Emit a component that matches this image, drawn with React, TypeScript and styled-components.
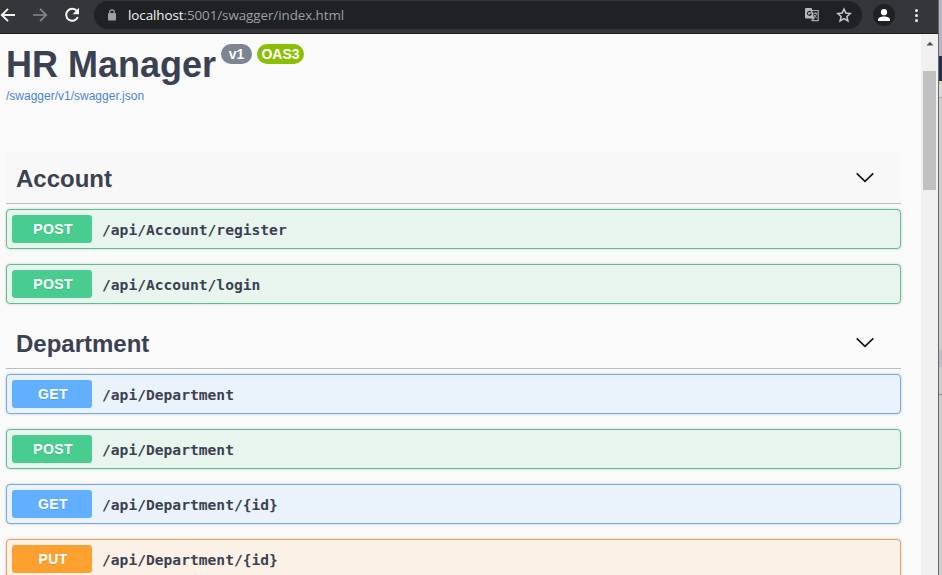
import React from 'react';
import styled, { createGlobalStyle } from 'styled-components';

const GlobalStyle = createGlobalStyle`
  * { box-sizing: border-box; }
  body { margin: 0; overflow: hidden; background: #fafafa; }
`;

const Screen = styled.div`
  display: flex;
  width: 942px;
  height: 575px;
  overflow: hidden;
  font-family: "Liberation Sans", Arial, sans-serif;
  color: #3b4151;
`;
const BrowserWindow = styled.div`
  display: flex;
  flex-direction: column;
  width: 939px;
  border-right: 1px solid #68686a;
`;
const Desktop = styled.div`
  display: flex;
  flex-direction: column;
  width: 3px;
  background: #cdcdce;
`;
const DesktopBand = styled.div<{ $h: number; $color: string }>`
  height: ${p => p.$h}px;
  background: ${p => p.$color};
`;
const Toolbar = styled.div`
  display: flex;
  align-items: flex-start;
  height: 34px;
  flex: none;
  background: #35363a;
  border-bottom: 1px solid #231b20;
`;
const NavIcons = styled.div`
  display: flex;
  gap: 16px;
  padding-top: 7px;
  width: 94px;
  svg { flex: none; display: block; }
`;
const AddressBar = styled.div`
  display: flex;
  align-items: center;
  width: 768px;
  height: 28px;
  padding: 0 10px 0 12px;
  margin-top: 1px;
  border-radius: 14px;
  background: #202124;
`;
const Url = styled.div`
  flex: 1;
  margin-left: 10px;
  font: 13.4px/20px "Open Sans", "Noto Sans", sans-serif;
  letter-spacing: -0.07px;
  color: #9aa0a6;
  white-space: nowrap;
`;
const Host = styled.span`
  color: #f4f5f6;
`;
const BarIcons = styled.div`
  display: flex;
  gap: 16px;
  align-items: center;
`;
const Avatar = styled.div`
  display: flex;
  align-items: center;
  justify-content: center;
  width: 22px;
  height: 22px;
  margin: 4px 0 0 11px;
  border-radius: 50%;
  background: #202124;
`;
const MenuDots = styled.div`
  display: flex;
  flex-direction: column;
  gap: 2px;
  margin: 9px 0 0 20px;
`;
const Dot = styled.i`
  width: 3px;
  height: 3px;
  border-radius: 1.5px;
  background: #f1f3f4;
`;
const Viewport = styled.div`
  display: flex;
  flex: 1;
  min-height: 0;
`;
const Page = styled.main`
  width: 921px;
  padding: 10px 20px 0 6px;
  background: #fafafa;
  overflow: hidden;
`;
const Scrollbar = styled.div`
  display: flex;
  flex-direction: column;
  align-items: center;
  width: 17px;
  padding-top: 7px;
  background: #f0f0f0;
`;
const Thumb = styled.div`
  width: 13px;
  height: 119px;
  margin-top: 25px;
  background: #c1c1c1;
`;
const TitleRow = styled.div`
  display: flex;
  align-items: flex-start;
  height: 43px;
`;
const Title = styled.h1`
  margin: 0;
  width: 215px;
  font-size: 36px;
  line-height: 41px;
  font-weight: bold;
  white-space: nowrap;
`;
const Pill = styled.span<{ $w: number; $color: string }>`
  width: ${p => p.$w}px;
  height: 20px;
  margin-right: 5px;
  border-radius: 10px;
  background: ${p => p.$color};
  color: #fff;
  font-size: 14px;
  line-height: 21px;
  font-weight: bold;
  text-align: center;
`;
const SpecLink = styled.a`
  display: block;
  height: 18px;
  color: #4a84d6;
  font-size: 12px;
  line-height: 18px;
`;
const Sections = styled.div`
  margin-top: 48px;
`;
const SectionHead = styled.div<{ $hover?: boolean }>`
  display: flex;
  align-items: center;
  justify-content: space-between;
  height: 51px;
  margin-bottom: 5px;
  padding: 0 26px 0 10px;
  border-bottom: 1px solid #bbbcc0;
  background: ${p => (p.$hover ? '#f8f8f8' : 'transparent')};
`;
const SectionName = styled.h2`
  margin: 0;
  padding-top: 2px;
  font-size: 24px;
  line-height: 30px;
  font-weight: bold;
`;
const Operation = styled.div<{ $color: string; $bg: string }>`
  display: flex;
  align-items: center;
  height: 40px;
  margin-bottom: 15px;
  padding: 0 5px;
  border: 1px solid ${p => p.$color};
  border-radius: 4px;
  background: ${p => p.$bg};
  box-shadow: 0 0 3px rgba(0, 0, 0, 0.19);
`;
const Group = styled.section`
  height: 165px;
`;
const Method = styled.span<{ $color: string }>`
  width: 80px;
  height: 28px;
  padding-left: 2px;
  border-radius: 3px;
  background: ${p => p.$color};
  color: #fff;
  font-size: 14px;
  line-height: 28px;
  font-weight: bold;
  letter-spacing: 0.4px;
  text-align: center;
  text-shadow: 0 1px 0 rgba(0, 0, 0, 0.1);
`;
const Path = styled.span`
  margin: 2px 0 0 10px;
  font: bold 14.62px/20px "DejaVu Sans Mono", monospace;
`;

type Verb = 'GET' | 'POST' | 'PUT';
const palette: Record<Verb, { color: string; border: string; bg: string }> = {
  GET: { color: '#61affe', border: '#73a9e4', bg: '#eaf3fb' },
  POST: { color: '#49cc90', border: '#5bbf92', bg: '#e7f5ee' },
  PUT: { color: '#fca130', border: '#eaa35c', bg: '#fbf1e7' },
};
const groups: { name: string; ops: [Verb, string][] }[] = [
  { name: 'Account', ops: [['POST', '/api/Account/register'], ['POST', '/api/Account/login']] },
  {
    name: 'Department',
    ops: [
      ['GET', '/api/Department'],
      ['POST', '/api/Department'],
      ['GET', '/api/Department/{id}'],
      ['PUT', '/api/Department/{id}'],
    ],
  },
];

const Navigation = () => (
  <NavIcons>
    <svg width="16" height="16" viewBox="0 0 16 16" fill="none" stroke="#f1f3f4" strokeWidth="1.9">
      <path d="M15 8H2M8 1.8 1.8 8 8 14.2" />
    </svg>
    <svg width="16" height="16" viewBox="0 0 16 16" fill="none" stroke="#85878a" strokeWidth="1.7">
      <path d="M1 8h13M8 1.8 14.2 8 8 14.2" />
    </svg>
    <svg width="16" height="16" viewBox="0 0 16 16">
      <path d="M13 4.2A6 6 0 1 0 13.8 10" fill="none" stroke="#f1f3f4" strokeWidth="2" />
      <path d="M15 .8v6.4H8.6z" fill="#f1f3f4" />
    </svg>
  </NavIcons>
);

const Lock = () => (
  <svg width="12" height="14" viewBox="0 0 12 14">
    <rect x="2" y="5" width="8" height="7.5" rx="1" fill="#9aa0a6" />
    <path d="M3.7 5.5V4.2a2.3 2.3 0 0 1 4.6 0v1.3" fill="none" stroke="#9aa0a6" strokeWidth="1.2" />
  </svg>
);

const Translate = () => (
  <svg width="16" height="16" viewBox="0 0 16 16">
    <path d="M6 3.5h8.2v10.2H7.6" fill="none" stroke="#a5a8ac" strokeWidth="1.2" />
    <path d="M2 1h5.6l2.7 10.5H2a1 1 0 0 1-1-1V2a1 1 0 0 1 1-1z" fill="#b6b8bb" />
    <path d="M7 5.2A2 2 0 1 0 7.3 7H5.5" fill="none" stroke="#292a2d" strokeWidth="1.1" />
    <path d="M9.2 6.3h4M11.3 5.3v1M12.6 6.5c-.5 2-1.5 3.4-2.8 4.2M10 7.7c.6 1.4 1.5 2.5 2.8 3.4M8 11.5l2.3 0-2.2 2.3z" fill="none" stroke="#a5a8ac" />
  </svg>
);

const Star = () => (
  <svg width="16" height="16" viewBox="0 0 16 16" fill="none" stroke="#c8cacc" strokeWidth="1.5">
    <path d="m8 2 1.8 4.1 4.5.4-3.4 3 1 4.4L8 11.6l-3.9 2.3 1-4.4-3.4-3 4.5-.4z" />
  </svg>
);

const Chevron = () => (
  <svg width="20" height="20" viewBox="0 0 20 20" fill="none" stroke="#111" strokeWidth="1.6">
    <path d="m1.7 5.3 8.3 8 8.3-8" />
  </svg>
);

export default function App() {
  return (
    <>
      <GlobalStyle />
      <Screen>
        <BrowserWindow>
          <Toolbar>
            <Navigation />
            <AddressBar>
              <Lock />
              <Url><Host>localhost</Host>:5001/swagger/index.html</Url>
              <BarIcons><Translate /><Star /></BarIcons>
            </AddressBar>
            <Avatar>
              <svg width="12" height="14" viewBox="0 0 12 14" fill="#fff">
                <circle cx="6" cy="4.2" r="3.1" />
                <path d="M0 13v-1.5C0 9.5 3.2 8.5 6 8.5s6 1 6 3V13z" />
              </svg>
            </Avatar>
            <MenuDots><Dot /><Dot /><Dot /></MenuDots>
          </Toolbar>
          <Viewport>
            <Page>
              <TitleRow>
                <Title>HR Manager</Title>
                <Pill $w={31} $color="#7d8492">v1</Pill>
                <Pill $w={47} $color="#89bf04">OAS3</Pill>
              </TitleRow>
              <SpecLink>/swagger/v1/swagger.json</SpecLink>
              <Sections>
                {groups.map((group, i) => (
                  <Group key={group.name}>
                    <SectionHead $hover={i === 0}>
                      <SectionName>{group.name}</SectionName>
                      <Chevron />
                    </SectionHead>
                    {group.ops.map(([verb, path]) => (
                      <Operation key={verb + path} $color={palette[verb].border} $bg={palette[verb].bg}>
                        <Method $color={palette[verb].color}>{verb}</Method>
                        <Path>{path}</Path>
                      </Operation>
                    ))}
                  </Group>
                ))}
              </Sections>
            </Page>
            <Scrollbar>
              <svg width="8" height="5" viewBox="0 0 8 5"><path d="M.5 4.5 4 .8l3.5 3.7z" fill="#505050" /></svg>
              <Thumb />
            </Scrollbar>
          </Viewport>
        </BrowserWindow>
        <Desktop>
          <DesktopBand $h={56} $color="#b4b4c2" />
          <DesktopBand $h={25} $color="#20304d" />
          <DesktopBand $h={4} $color="#d4d2b8" />
          <DesktopBand $h={12} $color="#d9d9da" />
          <DesktopBand $h={1} $color="#a9a9a9" />
          <DesktopBand $h={252} $color="#cdcdce" />
          <DesktopBand $h={17} $color="#bdbdc6" />
          <DesktopBand $h={27} $color="#cdcdce" />
          <DesktopBand $h={1} $color="#8c8c8c" />
        </Desktop>
      </Screen>
    </>
  );
}
